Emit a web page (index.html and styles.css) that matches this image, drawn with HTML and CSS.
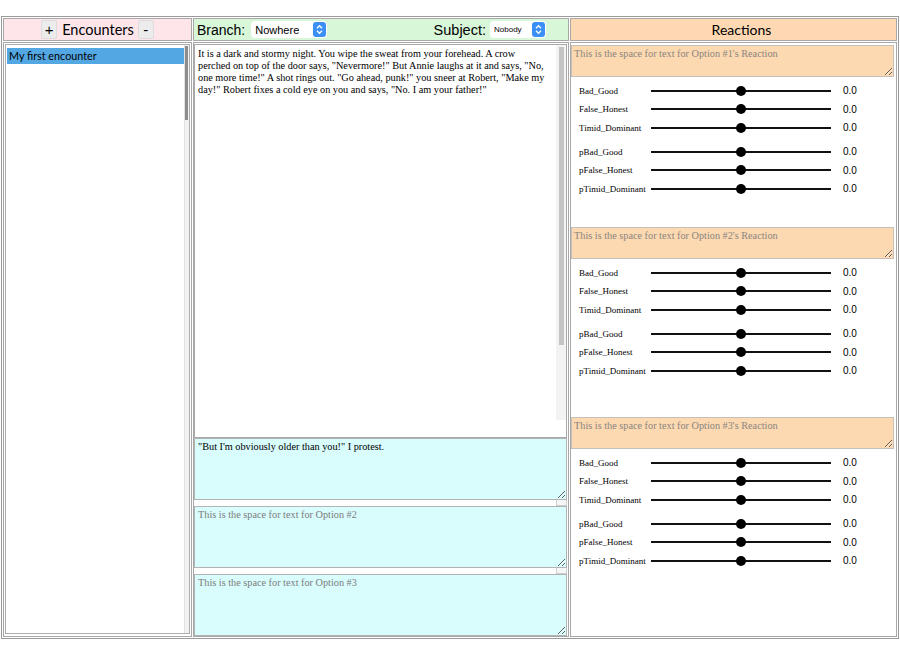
FILE: index.html
```html
<!DOCTYPE html>
<html>
<head>
<meta charset="utf-8">
<title>Encounters</title>
<link rel="stylesheet" href="styles.css">
</head>
<body>
<div class="app">
  <div class="hd hd-enc">
    <button class="mini">+</button><span class="title">Encounters</span><button class="mini">-</button>
  </div>
  <div class="hd hd-branch">
    <span class="lbl">Branch:</span>
    <div class="popup popup-branch"><span>Nowhere</span><svg class="stepper" width="13" height="15" viewBox="0 0 13 15"><rect x="0" y="0" width="13" height="15" rx="3" fill="#3b8ff5"/><path d="M4 6.2 L6.5 3.7 L9 6.2 M4 8.8 L6.5 11.3 L9 8.8" fill="none" stroke="#fff" stroke-width="1.3"/></svg></div>
    <span class="lbl lbl-subject">Subject:</span>
    <div class="popup popup-subject"><span>Nobody</span><svg class="stepper" width="13" height="15" viewBox="0 0 13 15"><rect x="0" y="0" width="13" height="15" rx="3" fill="#3b8ff5"/><path d="M4 6.2 L6.5 3.7 L9 6.2 M4 8.8 L6.5 11.3 L9 8.8" fill="none" stroke="#fff" stroke-width="1.3"/></svg></div>
  </div>
  <div class="hd hd-react"><span class="title">Reactions</span></div>

  <div class="cell enc-cell">
    <div class="enc-list">
      <div class="enc-items"><div class="enc-item sel">My first encounter</div></div>
      <div class="vscroll enc-scroll"><div class="thumb"></div></div>
    </div>
  </div>

  <div class="cell story-cell">
    <div class="story">
      <div class="story-text">It is a dark and stormy night. You wipe the sweat from your forehead. A crow<br>perched on top of the door says, "Nevermore!" But Annie laughs at it and says, "No,<br>one more time!" A shot rings out. "Go ahead, punk!" you sneer at Robert, "Make my<br>day!" Robert fixes a cold eye on you and says, "No. I am your father!"</div>
      <div class="vscroll story-scroll"><div class="thumb"></div></div>
    </div>
    <textarea class="option">"But I'm obviously older than you!" I protest.</textarea>
    <div class="hstrip"><span class="corner"></span></div>
    <textarea class="option" placeholder="This is the space for text for Option #2"></textarea>
    <div class="hstrip"><span class="corner"></span></div>
    <textarea class="option" placeholder="This is the space for text for Option #3"></textarea>
  </div>

  <div class="cell react-cell">
    <div class="reaction r1">
      <textarea class="react-text" placeholder="This is the space for text for Option #1's Reaction"></textarea>
      <div class="sliders">
        <div class="group">
          <div class="row"><span class="sl-label">Bad_Good</span><span class="track"><span class="knob"></span></span><span></span><span class="val">0.0</span></div>
          <div class="row"><span class="sl-label">False_Honest</span><span class="track"><span class="knob"></span></span><span></span><span class="val">0.0</span></div>
          <div class="row"><span class="sl-label">Timid_Dominant</span><span class="track"><span class="knob"></span></span><span></span><span class="val">0.0</span></div>
        </div>
        <div class="group">
          <div class="row"><span class="sl-label">pBad_Good</span><span class="track"><span class="knob"></span></span><span></span><span class="val">0.0</span></div>
          <div class="row"><span class="sl-label">pFalse_Honest</span><span class="track"><span class="knob"></span></span><span></span><span class="val">0.0</span></div>
          <div class="row"><span class="sl-label">pTimid_Dominant</span><span class="track"><span class="knob"></span></span><span></span><span class="val">0.0</span></div>
        </div>
      </div>
    </div>
    <div class="reaction r2">
      <textarea class="react-text" placeholder="This is the space for text for Option #2's Reaction"></textarea>
      <div class="sliders">
        <div class="group">
          <div class="row"><span class="sl-label">Bad_Good</span><span class="track"><span class="knob"></span></span><span></span><span class="val">0.0</span></div>
          <div class="row"><span class="sl-label">False_Honest</span><span class="track"><span class="knob"></span></span><span></span><span class="val">0.0</span></div>
          <div class="row"><span class="sl-label">Timid_Dominant</span><span class="track"><span class="knob"></span></span><span></span><span class="val">0.0</span></div>
        </div>
        <div class="group">
          <div class="row"><span class="sl-label">pBad_Good</span><span class="track"><span class="knob"></span></span><span></span><span class="val">0.0</span></div>
          <div class="row"><span class="sl-label">pFalse_Honest</span><span class="track"><span class="knob"></span></span><span></span><span class="val">0.0</span></div>
          <div class="row"><span class="sl-label">pTimid_Dominant</span><span class="track"><span class="knob"></span></span><span></span><span class="val">0.0</span></div>
        </div>
      </div>
    </div>
    <div class="reaction r3">
      <textarea class="react-text" placeholder="This is the space for text for Option #3's Reaction"></textarea>
      <div class="sliders">
        <div class="group">
          <div class="row"><span class="sl-label">Bad_Good</span><span class="track"><span class="knob"></span></span><span></span><span class="val">0.0</span></div>
          <div class="row"><span class="sl-label">False_Honest</span><span class="track"><span class="knob"></span></span><span></span><span class="val">0.0</span></div>
          <div class="row"><span class="sl-label">Timid_Dominant</span><span class="track"><span class="knob"></span></span><span></span><span class="val">0.0</span></div>
        </div>
        <div class="group">
          <div class="row"><span class="sl-label">pBad_Good</span><span class="track"><span class="knob"></span></span><span></span><span class="val">0.0</span></div>
          <div class="row"><span class="sl-label">pFalse_Honest</span><span class="track"><span class="knob"></span></span><span></span><span class="val">0.0</span></div>
          <div class="row"><span class="sl-label">pTimid_Dominant</span><span class="track"><span class="knob"></span></span><span></span><span class="val">0.0</span></div>
        </div>
      </div>
    </div>
  </div>
</div>
</body>
</html>
```
FILE: styles.css
```css
* { box-sizing: border-box; }
body {
  margin: 0;
  background: #fff;
  font-family: "Liberation Sans", Arial, sans-serif;
  color: #000;
}
.app {
  margin: 16px 0 0 1px;
  width: 898px;
  height: 623px;
  border: 1px solid #9b9b9b;
  padding: 1px;
  display: grid;
  grid-template-columns: 189px 376px 1fr;
  grid-template-rows: 23px 1fr;
  gap: 1px;
}
.hd, .cell {
  border: 1px solid #a8a8a8;
  min-height: 0;
  min-width: 0;
}
.hd { display: flex; align-items: center; }
.title { font-family: Lato, "Open Sans", sans-serif; }

.hd-enc { background: #fde5ea; justify-content: center; }
.hd-enc .title { font-size: 14.5px; margin: 0 4px 0 5px; }
.mini {
  width: 16px;
  height: 19px;
  padding: 0;
  border: 1px solid #dcdcdc;
  border-radius: 2px;
  background: #ececec;
  font-family: "Liberation Sans", Arial, sans-serif;
  font-size: 15px;
  line-height: 17px;
  color: #000;
}

.hd-branch { background: #d8f7d8; padding: 0 22px 0 3px; }
.lbl { font-size: 14px; }
.lbl-subject { margin-left: auto; font-size: 14.5px; }
.popup {
  height: 17px;
  background: #fff;
  border-radius: 4px;
  display: flex;
  align-items: center;
  justify-content: space-between;
  padding: 0 1px 0 4px;
}
.popup-branch { width: 76px; margin-left: 6px; font-size: 11px; }
.popup-subject { width: 56px; margin-left: 4px; font-size: 8px; }
.stepper { display: block; }

.hd-react { background: #fdd8b2; justify-content: center; padding-left: 16px; }
.hd-react .title { font-size: 14px; }

/* left column */
.enc-cell { display: flex; }
.enc-list {
  flex: 1;
  margin: 1px 1px 2px 1px;
  border: 1px solid #adadad;
  display: flex;
}
.enc-items { flex: 1; padding: 3px 0 0 1px; }
.enc-item {
  height: 16px;
  line-height: 16px;
  padding-left: 2px;
  font-family: Lato, "Open Sans", sans-serif;
  font-size: 10.8px;
}
.enc-item.sel { background: #53a7e2; }
.vscroll { background: #f3f3f3; }
.enc-scroll { width: 5px; border-left: 1px solid #e2e2e2; padding-top: 1px; }
.enc-scroll .thumb { width: 3px; height: 74px; background: #8c8c8c; }

/* middle column */
.story-cell { display: flex; flex-direction: column; padding: 1px 1px 0 0; }
.story {
  height: 394px;
  border: 1px solid #a9a9a9;
  display: flex;
  flex: none;
}
.story-text {
  flex: 1;
  padding: 3px 0 0 3px;
  font-family: "Liberation Serif", "Times New Roman", serif;
  font-size: 10.25px;
  line-height: 12px;
  white-space: nowrap;
  overflow: hidden;
}
.story-scroll { width: 10px; height: 375px; padding: 2px 2px 0 2px; }
.story-scroll .thumb { width: 5px; height: 298px; background: #c4c4c4; margin: 0 auto; }

textarea {
  display: block;
  margin: 0;
  width: 100%;
  outline: none;
  font-family: "Liberation Serif", "Times New Roman", serif;
  font-size: 10.25px;
  line-height: 12px;
  color: #000;
}
textarea::placeholder { color: #7c7c7c; }
.option {
  height: 62px;
  flex: none;
  border: 1px solid #b3b3b3;
  background: #d9fcfd;
  padding: 2px 3px;
}
.hstrip { height: 6px; flex: none; display: flex; justify-content: flex-end; }
.corner { width: 11px; border: 1px solid #cfcfcf; border-top: none; background: #f6f6f6; }

/* right column */
.react-cell {
  display: flex;
  flex-direction: column;
  overflow: hidden;
  padding: 2px 2px 0 0;
}
.reaction { flex: none; }
.r1 { height: 182px; }
.r2 { height: 190px; }
.react-text {
  height: 32px;
  border: 1px solid #c6c0ba;
  background: #fdd9b1;
  padding: 2px;
}
.react-text::placeholder { color: #8a8580; }
.sliders { padding-top: 4.6px; }
.group + .group { margin-top: 5.5px; }
.row {
  height: 18.5px;
  display: grid;
  grid-template-columns: 72px 180px 12px auto;
  align-items: center;
  padding-left: 8px;
}
.sl-label {
  font-family: "Liberation Serif", "Times New Roman", serif;
  font-size: 9px;
  white-space: nowrap;
}
.track {
  height: 2px;
  background: #111;
  display: flex;
  align-items: center;
  justify-content: center;
}
.knob {
  width: 10px;
  height: 10px;
  border-radius: 50%;
  background: #000;
  flex: none;
}
.val { font-size: 10px; }
```
